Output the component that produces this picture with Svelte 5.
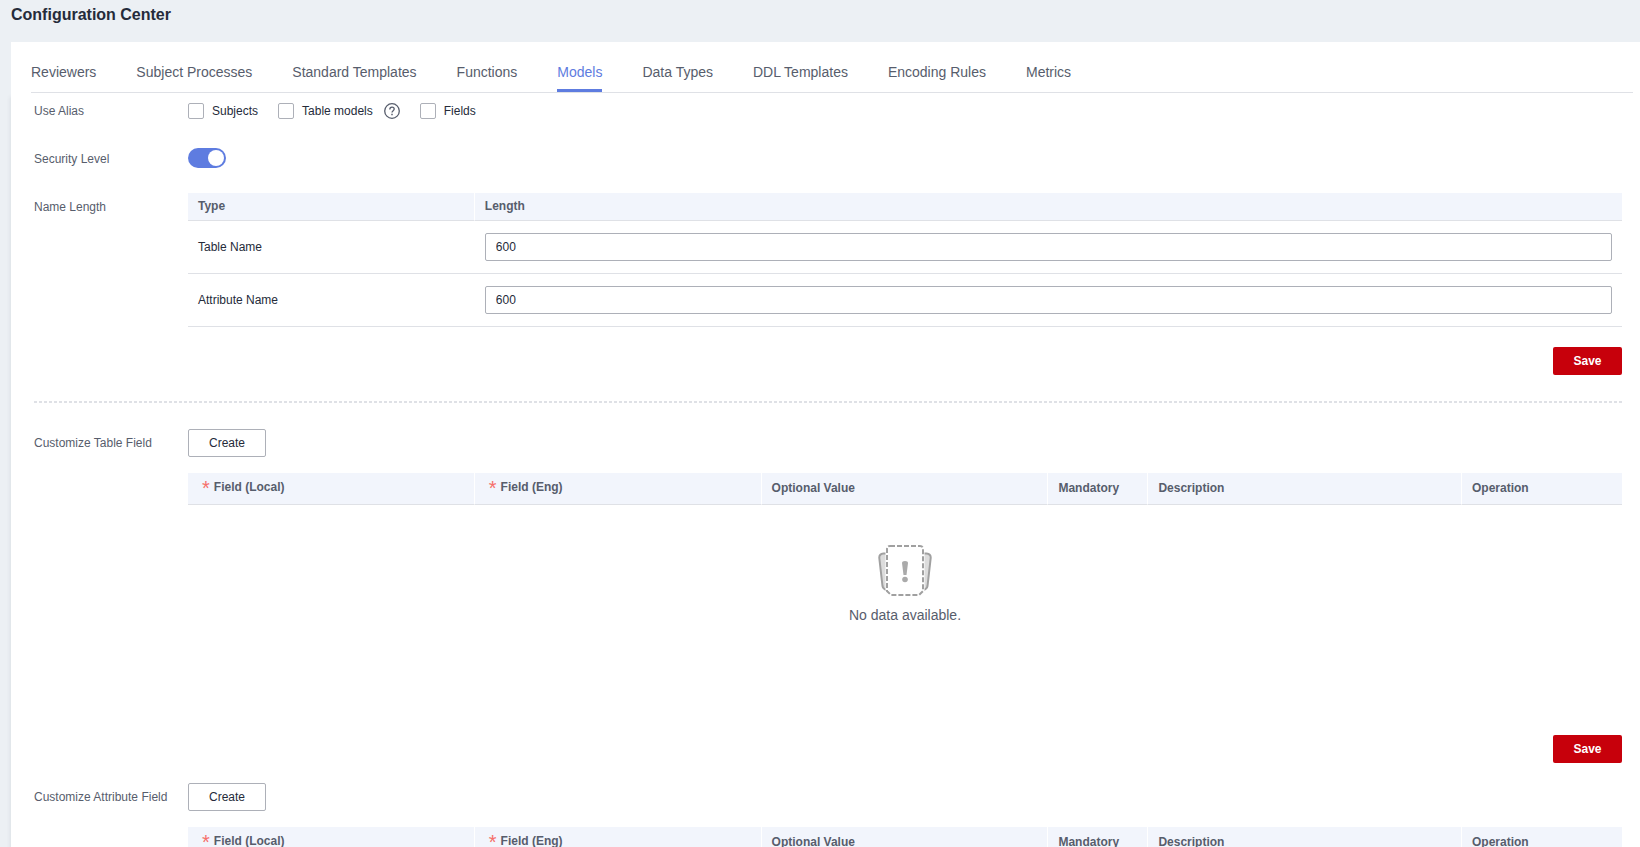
<script>
    let tabs=[
        'Reviewers',
        'Subject Processes',
        'Standard Templates',
        'Functions',
        'Models',
        'Data Types',
        'DDL Templates',
        'Encoding Rules',
        'Metrics'
    ]
    let active='Models'

    let aliases=[
        {id:'subjects',label:'Subjects',checked:false,help:false},
        {id:'table-models',label:'Table models',checked:false,help:true},
        {id:'fields',label:'Fields',checked:false,help:false}
    ]
    let security=true

    let lengths=[
        {id:'table-name',type:'Table Name',value:'600'},
        {id:'attribute-name',type:'Attribute Name',value:'600'}
    ]

    let columns=[
        {name:'Field (Local)',required:true,size:'wide'},
        {name:'Field (Eng)',required:true,size:'wide'},
        {name:'Optional Value',required:false,size:'wide'},
        {name:'Mandatory',required:false,size:'flag'},
        {name:'Description',required:false,size:'rest'},
        {name:'Operation',required:false,size:'action'}
    ]
    let sections=['Customize Table Field','Customize Attribute Field']
</script>

<div class="page">
    <h1>Configuration Center</h1>
    <main>
        <nav>
            {#each tabs as tab}
                <button class="tab" class:active={tab==active} on:click={()=>active=tab}>{tab}</button>
            {/each}
        </nav>
        <div class="panel">
            <div class="row">
                <span class="label">Use Alias</span>
                <div class="field aliases">
                    {#each aliases as alias}
                        <div class="alias">
                            <input class="check" type="checkbox" id={alias.id} bind:checked={alias.checked}>
                            <label for={alias.id}>{alias.label}</label>
                            {#if alias.help}
                                <button class="help" aria-label="Help">
                                    <svg width="16" height="16" viewBox="0 0 16 16" fill="none" stroke="#575d6c">
                                        <circle cx="8" cy="8" r="7.3" stroke-width="1.3"/>
                                        <path d="M5.8 6.4C5.8 5 6.7 4.1 8 4.1s2.2.8 2.2 2c0 1.6-2.2 1.7-2.2 3.5" stroke-width="1.3"/>
                                        <path d="M8 10.7v1.5" stroke-width="1.5"/>
                                    </svg>
                                </button>
                            {/if}
                        </div>
                    {/each}
                </div>
            </div>

            <div class="row">
                <label class="label" for="security">Security Level</label>
                <div class="field">
                    <input class="switch" type="checkbox" role="switch" id="security" bind:checked={security}>
                </div>
            </div>

            <div class="row">
                <span class="label">Name Length</span>
                <div class="field">
                    <table class="lengths">
                        <thead>
                            <tr>
                                <th class="wide">Type</th>
                                <th>Length</th>
                            </tr>
                        </thead>
                        <tbody>
                            {#each lengths as item}
                                <tr>
                                    <td><label for={item.id}>{item.type}</label></td>
                                    <td><input class="text" type="text" id={item.id} bind:value={item.value}></td>
                                </tr>
                            {/each}
                        </tbody>
                    </table>
                </div>
            </div>

            <div class="actions">
                <button class="save">Save</button>
            </div>
            <div class="divider"></div>

            {#each sections as section}
                <div class="row">
                    <span class="label">{section}</span>
                    <div class="field">
                        <button class="create">Create</button>
                        <table class="custom">
                            <thead>
                                <tr>
                                    {#each columns as col}
                                        <th class={col.size}>
                                            {#if col.required}
                                                <div class="required"><span class="star">*</span>{col.name}</div>
                                            {:else}
                                                {col.name}
                                            {/if}
                                        </th>
                                    {/each}
                                </tr>
                            </thead>
                        </table>
                        <div class="empty">
                            <svg width="54" height="52" viewBox="0 0 54 52" fill="none" stroke="#a0a0a0" stroke-width="2">
                                <path d="M9 8.5H5.5Q1 9 1.3 13L4.500 41Q5 44 9.5 45.5z" fill="#dcdcdc"/>
                                <path d="M45 8.5h3.5Q53 9 52.7 13L49.500 41Q49 44 44.5 45.5z" fill="#dcdcdc"/>
                                <path d="M12 1h30q3 0 3 3v42l-4 4H13l-4-4V4q0-3 3-3z" fill="#fff" stroke="#fff" stroke-width="3"/>
                                <path d="M12 1h30q3 0 3 3v42l-4 4H13l-4-4V4q0-3 3-3z" stroke-dasharray="5 2"/>
                                <path d="M24 18q0-2 3-2t3 2l-1.5 12h-3z" fill="#aaa" stroke="none"/>
                                <circle cx="27" cy="34.5" r="2.8" fill="#aaa" stroke="none"/>
                            </svg>
                            <p>No data available.</p>
                        </div>
                    </div>
                </div>
                <div class="actions">
                    <button class="save">Save</button>
                </div>
            {/each}
        </div>
    </main>
</div>

<style>
    :global(body)
    {
        margin: 0;
        background-color: #ecf0f4;
    }
    .page
    {
        box-sizing: border-box;
        height: 100vh;
        overflow-y: auto;
        scrollbar-width: none;
        padding-left: 11px;
        font-family: Arial, "Liberation Sans", sans-serif;
        font-size: 12px;
        line-height: 14px;
        color: #252b3a;
    }
    button, input
    {
        box-sizing: border-box;
        margin: 0;
        font-family: inherit;
        font-size: inherit;
        color: inherit;
    }
    button
    {
        padding: 0;
        border: none;
        background: none;
        cursor: pointer;
    }
    h1
    {
        margin: 0;
        padding: 6px 0 18px;
        font-size: 16px;
        line-height: 18px;
    }
    main
    {
        background-color: #fff;
    }
    nav
    {
        display: flex;
        gap: 40px;
        margin: 0 7px 0 20px;
        border-bottom: 1px solid #dfe1e6;
    }
    .tab
    {
        padding: 22px 0 9px;
        border-bottom: 3px solid transparent;
        font-size: 14px;
        line-height: 16px;
        color: #575d6c;
    }
    .tab.active
    {
        border-color: #5e7ce0;
        color: #5e7ce0;
    }
    .panel
    {
        padding: 4px 18px 20px 23px;
        box-shadow: -1px 4px 4px rgba(41, 48, 64, 0.08);
    }
    .row
    {
        display: flex;
        margin-bottom: 20px;
    }
    .label
    {
        flex: none;
        width: 154px;
        line-height: 28px;
        color: #575d6c;
    }
    .field
    {
        flex: 1;
        min-width: 0;
    }
    .aliases, .alias
    {
        display: flex;
        align-items: center;
    }
    .aliases
    {
        gap: 20px;
    }
    .alias
    {
        gap: 8px;
    }
    .check
    {
        appearance: none;
        width: 16px;
        height: 16px;
        border: 1px solid #adb0b8;
        border-radius: 2px;
        background-color: #fff;
    }
    .check:checked
    {
        border-color: #5e7ce0;
        background-color: #5e7ce0;
    }
    .help
    {
        display: flex;
        margin-left: 3px;
    }
    .switch
    {
        appearance: none;
        display: block;
        width: 38px;
        height: 20px;
        margin-top: 3px;
        padding: 2px;
        border-radius: 10px;
        background-color: #adb0b8;
    }
    .switch::before
    {
        content: '';
        display: block;
        width: 16px;
        height: 16px;
        border-radius: 50%;
        background-color: #fff;
    }
    .switch:checked
    {
        background-color: #5e7ce0;
    }
    .switch:checked::before
    {
        margin-left: auto;
    }
    table
    {
        width: 100%;
        table-layout: fixed;
        border-collapse: separate;
        border-spacing: 0;
    }
    th, td
    {
        box-sizing: border-box;
        padding: 12px 10px;
        border-bottom: 1px solid #dfe1e6;
        text-align: left;
    }
    th
    {
        height: 28px;
        padding: 0 10px 2px;
        background-color: #f2f5fc;
        background-clip: padding-box;
        color: #575d6c;
    }
    th:not(:last-child)
    {
        border-right: 1px solid #fff;
    }
    .custom th
    {
        height: 32px;
    }
    .wide
    {
        width: 20%;
    }
    .flag
    {
        width: 100px;
    }
    .action
    {
        width: 160px;
    }
    .required
    {
        display: flex;
        gap: 4px;
        padding: 0 0 2px 4px;
    }
    .star
    {
        height: 14px;
        font-size: 20px;
        font-weight: normal;
        line-height: 16px;
        color: #f66f6a;
    }
    .text
    {
        display: block;
        width: 100%;
        height: 28px;
        padding: 0 10px;
        border: 1px solid #adb0b8;
        border-radius: 2px;
        background-color: #fff;
    }
    .actions
    {
        display: flex;
        justify-content: flex-end;
        margin-bottom: 20px;
    }
    .save, .create
    {
        height: 28px;
        padding: 0 20px;
        border-radius: 2px;
    }
    .save
    {
        min-width: 69px;
        background-color: #c7000b;
        font-weight: bold;
        color: #fff;
    }
    .create
    {
        display: block;
        margin-bottom: 16px;
        border: 1px solid #adb0b8;
        background-color: #fff;
    }
    .divider
    {
        height: 2px;
        margin: 26px 0;
        background: repeating-linear-gradient(to right, #dfe1e6 0 3px, transparent 3px 5px);
    }
    .empty
    {
        box-sizing: border-box;
        display: flex;
        flex-direction: column;
        align-items: center;
        gap: 10px;
        min-height: 210px;
        padding-top: 40px;
    }
    .empty p
    {
        margin: 0;
        font-size: 14px;
        line-height: 16px;
        color: #575d6c;
    }
</style>
